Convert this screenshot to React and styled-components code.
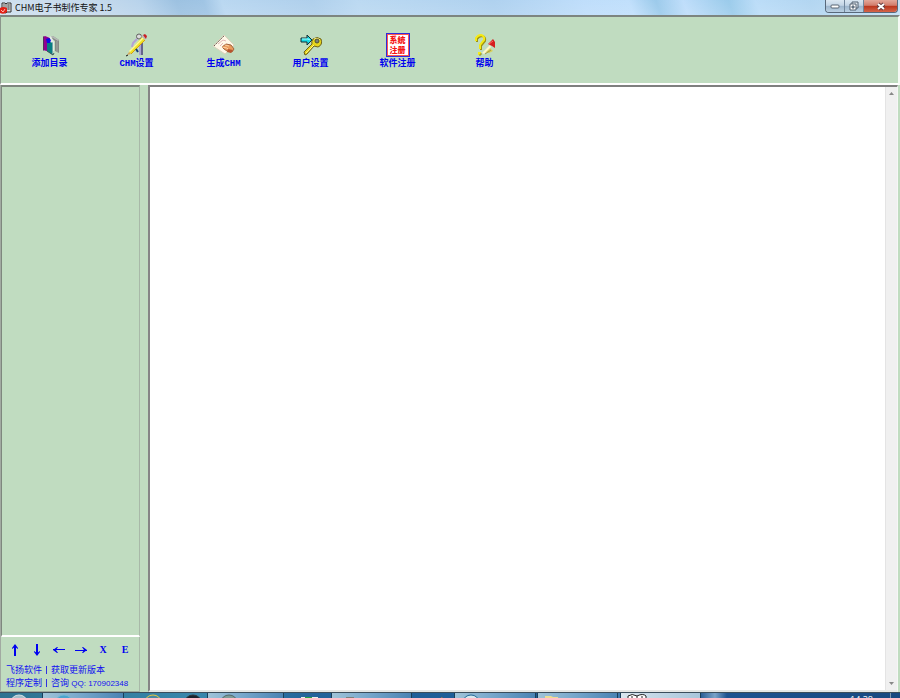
import React from 'react';
import styled, { createGlobalStyle } from 'styled-components';

const Global = createGlobalStyle`
  *, *::before, *::after { box-sizing: border-box; }
  body { margin: 0; overflow: hidden; }
`;

const Desktop = styled.div`
  display: grid;
  grid-template-rows: 15px 70px minmax(0, 1fr) 6px;
  height: 100vh;
  background: #c0dcc0;
  font-family: "Liberation Sans", "Noto Sans CJK SC", sans-serif;
`;

const TitleBar = styled.header`
  display: flex;
  align-items: flex-start;
  padding-right: 2px;
  background:
    linear-gradient(180deg, rgba(255,255,255,.12), rgba(255,255,255,.2)),
    linear-gradient(70deg, #c9dced 0%, #bdd4e9 11%, #aecde9 16%, #8fb9dd 20%, #92bce0 23%, #b0d2ef 25%, #a4c9e9 35%, #b2d4f0 40%, #a4cbed 55%, #b6d9fa 65%, #b8dbfb 70%, #8ec3e8 73%, #b6d9fa 76%, #8dc4e8 81%, #b2d8f7 84%, #a8d0ef 90%, #bcdcf4 100%);
`;

const Title = styled.h1`
  display: flex;
  flex: 1;
  gap: 3px;
  align-items: center;
  height: 15px;
  margin: 0;
  color: #111;
  font: 400 9px/15px "Noto Sans CJK SC", sans-serif;
  white-space: nowrap;
`;

const WindowButtons = styled.div`
  display: flex;
  height: 13px;
  border: 1px solid #58687a;
  border-top: 0;
  border-radius: 0 0 4px 4px;
  overflow: hidden;
`;

const WindowButton = styled.button`
  display: grid;
  place-items: center;
  width: ${p => (p.$close ? 33 : 19)}px;
  padding: 0;
  border: 0;
  border-right: ${p => (p.$close ? 0 : 1)}px solid #71869c;
  background: ${p => p.$close
    ? 'linear-gradient(#e3a79a, #d27c6b 45%, #b9341c 50%, #d4654a)'
    : 'linear-gradient(#dbe7f2, #c2d4e5 45%, #9db5cc 50%, #bad0e3)'};
`;

const Toolbar = styled.nav`
  display: flex;
  align-items: flex-start;
  padding: 16px 5px 0;
  border: solid;
  border-width: 2px 2px 2px 1px;
  border-color: #7d8580 #f4faf4 #fff #8b958b;
`;

const ToolButton = styled.button`
  display: flex;
  flex-direction: column;
  align-items: center;
  gap: 1px;
  width: 87px;
  padding: 0;
  border: 0;
  background: none;
  color: #0000f0;
  font: 700 9px/12px "Liberation Mono", "Noto Sans CJK SC", monospace;
  white-space: nowrap;
`;

const Workspace = styled.main`
  display: grid;
  grid-template-columns: 140px minmax(0, 1fr);
  gap: 8px;
  padding-right: 2px;
  min-height: 0;
`;

const Sidebar = styled.aside`
  display: grid;
  grid-template-rows: minmax(0, 1fr) 55px;
  border-left: 1px solid #a2aaa2;
  border-right: 1px solid #fff;
`;

const Tree = styled.section`
  border: solid;
  border-width: 2px 1px 2px 1px;
  border-color: #7e877e #a8b8a8 #fff #7e877e;
`;

const SidebarFooter = styled.footer`
  padding: 5px 3px 0;
  border-right: 1px solid #a8b8a8;
  border-bottom: 1px solid #9ba99b;
  color: #1010f0;
`;

const Actions = styled.div`
  display: grid;
  grid-template-columns: repeat(6, 22px);
  height: 22px;
`;

const Action = styled.button`
  display: grid;
  place-items: center;
  height: 16px;
  padding: 0;
  border: 0;
  background: none;
  color: #0000f0;
  font: 700 10px/16px "Liberation Serif", serif;
`;

const InfoRow = styled.div`
  display: grid;
  grid-template-columns: 37px 8px 1fr;
  height: 13px;
  padding-left: 2px;
  font: 400 8px/13px "Liberation Sans", "Noto Sans CJK SC", sans-serif;
  white-space: nowrap;
`;

const InfoLink = styled.a`
  color: inherit;
  text-decoration: none;
`;

const Han = styled.span`
  font-size: 9px;
`;

const Divider = styled.span`
  width: 1px;
  height: 8px;
  margin: 2px 3px;
  background: #3030e0;
`;

const Editor = styled.section`
  display: grid;
  grid-template-columns: minmax(0, 1fr) 12px;
  min-height: 0;
  border: solid;
  border-width: 2px 1px 2px 2px;
  border-color: #7f7f7f #f6f6f6 #e6e8e6 #858585;
  background: #fff;
`;

const Page = styled.textarea`
  width: 100%;
  height: 100%;
  padding: 4px;
  border: 0;
  outline: 0;
  resize: none;
  overflow: hidden;
  background: #fff;
  font: 9px/12px "Liberation Sans", sans-serif;
`;

const ScrollTrack = styled.div`
  display: flex;
  flex-direction: column;
  justify-content: space-between;
  border-left: 1px solid #e4e4e4;
  background: #f0f0f0;
`;

const ScrollButton = styled.button`
  display: grid;
  place-items: center;
  height: 13px;
  padding: 0;
  border: 0;
  background: none;
`;

const Taskbar = styled.footer`
  display: grid;
  grid-template-columns: 42fr 82fr 83fr 77fr 47fr 81fr 42fr 82fr 1fr 81fr 2fr 81fr 199fr;
  overflow: hidden;
  border-top: 1px solid #3b4e5c;
  background: linear-gradient(90deg, #2e7291 0%, #3987ac 22%, #22639a 35%, #1d5b96 60%, #659bc7 78%, #184b82 82%, #174980 96%, #38658d 100%);
`;

const TaskSlot = styled.div`
  display: flex;
  gap: 22px;
  padding-left: ${p => p.$inset || 0}px;
  overflow: hidden;
  background: ${p => (p.$tray ? 'linear-gradient(90deg, #2c5f96, #7aa3c8 7%, #1e5390 13%, #174980)' : 'none')};
`;

const TaskButton = styled.button`
  display: flex;
  padding: 0 0 0 ${p => p.$inset || 12}px;
  border: 1px solid #193e59;
  border-width: 0 1px;
  overflow: hidden;
  background: ${p => p.$active
    ? 'linear-gradient(90deg, #d8e6ee, #a8c5da)'
    : 'linear-gradient(90deg, #9fc3d8, #78a8cc 45%, #4a83b3)'};
`;

const Clock = styled.time`
  width: 41px;
  margin: 0 9px 0 auto;
  padding-top: 2px;
  border-right: 1px solid #7895ae;
  color: #fff;
  font: 400 9px/10px "Open Sans", sans-serif;
`;

const AppIcon = () => (
  <svg width="12" height="13" viewBox="0 0 12 13" aria-hidden="true">
    <path d="M2 2h3l1 1 1-1h4v9H7l-1 1-4-1z" fill="#dedede" stroke="#333" />
    <path d="M6 3v7M8 3v6M9 3v6M4 3v4" stroke="#666" />
    <path d="M0 7q3-2 7 0v4q-3 3-7 1z" fill="#e22117" />
    <path d="m1 9 2 2 2-3" fill="none" stroke="#ffb5ad" />
  </svg>
);

const BooksIcon = () => (
  <svg width="24" height="24" viewBox="0 0 24 24" aria-hidden="true">
    <path d="m12 4 3-1 6 4v13l-4-2V8z" fill="#858985" />
    <path d="m12 4 3-1 6 4-1 1-5-3z" fill="#b7bbb7" />
    <path d="m10 5 3-2 3 6v9h-3z" fill="#e4ebe4" />
    <path d="M19 8v11" stroke="#a6aaa6" />
    <path d="m5 4 2-1 5 2v14l-7-2z" fill="#920091" />
    <path d="M5 4v13l1 1V3z" fill="#54305e" />
    <path d="m9 8 6 2v12l-6-4z" fill="#087e83" />
    <path d="m14 10 1-1v12l-1 1z" fill="#71a8a7" />
    <path d="m8 6 3-1 2 2-1 3H9z" fill="#0a0ce5" />
    <path d="m9 18 6 4 1-2" fill="none" stroke="#375656" />
  </svg>
);

const CompassIcon = () => (
  <svg width="24" height="24" viewBox="0 0 24 24" aria-hidden="true">
    <path d="m12 6-4 4-1 4" fill="none" stroke="#b3a0d5" strokeWidth="2" />
    <path d="M15 12v10" stroke="#aba6d1" strokeWidth="2" />
    <path d="M17 8v14" stroke="#65648b" strokeWidth="2" />
    <circle cx="14" cy="3.5" r="2.5" fill="#ddd" stroke="#606060" />
    <path d="m4 19 2 2L20 7l-3-3z" fill="#eee326" />
    <path d="m4 18 14-14 1 1L5 19z" fill="#fff89b" />
    <path d="m6 21 14-14" stroke="#d59c15" />
    <path d="m16 3 2-1 3 3-1 2z" fill="#bcb5b5" />
    <path d="m18 2 2-1 2 2-1 3z" fill="#c91e24" />
    <path d="m4 19-2 3 4-1z" fill="#d5a85d" />
    <path d="m1 23 2-1" stroke="#111" />
    <path d="m11 16 2 3" stroke="#173c77" strokeWidth="2" />
  </svg>
);

const WritingIcon = () => (
  <svg width="24" height="24" viewBox="0 0 24 24" aria-hidden="true">
    <path d="M12 2 1 13l12 8 9-9z" fill="#fff8e8" stroke="#dcd2bc" />
    <path d="m2 13 10-10" stroke="#655e55" strokeDasharray="2 1" />
    <path d="m6 11 5-4 3 1M8 13l3-3" stroke="#e3b5b5" fill="none" />
    <path d="m10 14 4-3 5 1 3 4-2 3-5-1-3-2z" fill="#e99b5c" stroke="#a26440" />
    <path d="m10 14 5 1 2 2M13 12l4 1" stroke="#ffd0a0" fill="none" />
    <path d="m16 16 5 1-2 3-4-1z" fill="#b7542e" />
  </svg>
);

const KeyIcon = () => (
  <svg width="24" height="24" viewBox="0 0 24 24" aria-hidden="true">
    <path d="M2 5h6V2l5 5-5 5V9H2z" fill="#18d9e4" stroke="#142d34" />
    <path d="M3 6h6l2 1" stroke="#a5ffff" fill="none" />
    <path d="M14 6q4-3 8 0 2 6-3 8l-4-1-7 8-2 1-1-3 8-8q-1-2 1-5z" fill="#e6d51b" stroke="#6c6019" />
    <path d="M7 20 15 12M15 6q3-2 6 1" stroke="#fff686" fill="none" />
    <circle cx="18" cy="8" r="2" fill="#7a807a" stroke="#4f5131" />
  </svg>
);

const SealFrame = styled.span`
  display: grid;
  place-content: center;
  width: 24px;
  height: 24px;
  border: 1px solid #302adb;
  box-shadow: inset 0 0 0 1px #ff5650;
  background: #fff;
  color: #f51616;
  font: 900 8px/10px "Noto Sans CJK SC", sans-serif;
`;

const SealLine = styled.span`
  display: block;
`;

const SealIcon = () => (
  <SealFrame><SealLine>系统</SealLine><SealLine>注册</SealLine></SealFrame>
);

const HelpIcon = () => (
  <svg width="24" height="24" viewBox="0 0 24 24" aria-hidden="true">
    <path d="M4 9V6q2-3 5-3 4 1 3 5l-4 5v4" fill="none" stroke="#9f940e" strokeWidth="2" />
    <path d="M3 8V5q2-3 5-3 4 1 3 5l-4 5v4" fill="none" stroke="#f5e914" strokeWidth="2" />
    <path d="M5 19h3v3H5z" fill="#f6eb17" />
    <path d="M8 20v2H6" stroke="#9a9220" fill="none" />
    <path d="m12 19 5-4 3 3-4 2z" fill="#d9ce58" />
    <path d="m9 20 8-8 1 2-7 7z" fill="#fff6c8" />
    <path d="m15 11 5-5 2 3v6l-3-2z" fill="#d51d20" />
    <path d="m16 11 4-3" stroke="#ff6a63" />
    <path d="m12 21 6-4" stroke="#a59b43" />
  </svg>
);

const arrowTurns = { up: 0, right: 90, down: 180, left: 270 };

const Arrow = ({ direction }) => {
  const horizontal = direction === 'left' || direction === 'right';
  return (
    <svg width="12" height="12" viewBox="0 0 12 12" aria-hidden="true">
      <g transform={`rotate(${arrowTurns[direction]} 6 6)`} fill="#0000f0">
        <path d={horizontal ? 'M6 0h1v12H6z' : 'M5 1h2v11H5z'} />
        <path d="M6 0 9 4v1L6 3 3 5V4z" />
      </g>
    </svg>
  );
};

const Triangle = ({ down }) => (
  <svg width="5" height="3" viewBox="0 0 5 3" aria-hidden="true">
    <path d={down ? 'M0 0h5L2.5 3z' : 'M0 3h5L2.5 0z'} fill="#888" />
  </svg>
);

const Orb = ({ fill, stroke }) => (
  <svg width="18" height="6" viewBox="0 0 18 6" aria-hidden="true">
    <ellipse cx="9" cy="9" rx="8" ry="7" fill={fill} stroke={stroke} />
  </svg>
);

const tools = [
  ['添加目录', BooksIcon],
  ['CHM设置', CompassIcon],
  ['生成CHM', WritingIcon],
  ['用户设置', KeyIcon],
  ['软件注册', SealIcon],
  ['帮助', HelpIcon],
];

export default function App() {
  return (
    <>
      <Global />
      <Desktop>
        <TitleBar>
          <Title><AppIcon />CHM电子书制作专家 1.5</Title>
          <WindowButtons>
            <WindowButton aria-label="最小化">
              <svg width="10" height="8" viewBox="0 0 10 8"><rect x="1" y="3" width="8" height="3" rx="1" fill="#fff" stroke="#596572" /></svg>
            </WindowButton>
            <WindowButton aria-label="还原">
              <svg width="10" height="10" viewBox="0 0 10 10"><path d="M3 1h6v6H3z" fill="#dce5ed" stroke="#536171" /><path d="M1 3h6v6H1z" fill="#fff" stroke="#536171" /><path d="M3 5h2v2H3z" fill="#8da2b6" stroke="#536171" /></svg>
            </WindowButton>
            <WindowButton $close aria-label="关闭">
              <svg width="10" height="9" viewBox="0 0 10 9"><path d="m2 2 6 5M8 2 2 7" stroke="#653c40" strokeWidth="4" /><path d="m2 2 6 5M8 2 2 7" stroke="#fff" strokeWidth="2" /></svg>
            </WindowButton>
          </WindowButtons>
        </TitleBar>
        <Toolbar aria-label="工具栏">
          {tools.map(([label, Icon]) => (
            <ToolButton key={label}><Icon />{label}</ToolButton>
          ))}
        </Toolbar>
        <Workspace>
          <Sidebar>
            <Tree aria-label="目录" />
            <SidebarFooter>
              <Actions>
                <Action aria-label="上移"><Arrow direction="up" /></Action>
                <Action aria-label="下移"><Arrow direction="down" /></Action>
                <Action aria-label="左移"><Arrow direction="left" /></Action>
                <Action aria-label="右移"><Arrow direction="right" /></Action>
                <Action>X</Action>
                <Action>E</Action>
              </Actions>
              <InfoRow>
                <InfoLink href="#home"><Han>飞扬软件</Han></InfoLink><Divider />
                <InfoLink href="#update"><Han>获取更新版本</Han></InfoLink>
              </InfoRow>
              <InfoRow>
                <InfoLink href="#custom"><Han>程序定制</Han></InfoLink><Divider />
                <span><Han>咨询</Han> QQ: 170902348</span>
              </InfoRow>
            </SidebarFooter>
          </Sidebar>
          <Editor>
            <Page aria-label="正文" />
            <ScrollTrack>
              <ScrollButton aria-label="向上滚动"><Triangle /></ScrollButton>
              <ScrollButton aria-label="向下滚动"><Triangle down /></ScrollButton>
            </ScrollTrack>
          </Editor>
        </Workspace>
        <Taskbar>
          <TaskSlot $inset={10}><Orb fill="#a5bfca" stroke="#d3dfe4" /></TaskSlot>
          <TaskButton aria-label="任务 1"><Orb fill="#4ba3cd" stroke="#72b9d6" /></TaskButton>
          <TaskSlot $inset={20}><Orb fill="#4788a1" stroke="#e9c63f" /><Orb fill="#17222d" stroke="#30353a" /></TaskSlot>
          <TaskButton aria-label="任务 2"><Orb fill="#7d9c98" stroke="#536a6b" /></TaskButton>
          <TaskSlot $inset={16}>
            <svg width="20" height="6" viewBox="0 0 20 6"><path d="M1 4h7v2H1zm9 0h8v2h-8z" fill="#e7f0e9" /><path d="M5 5h7" stroke="#29a343" strokeWidth="2" /></svg>
          </TaskSlot>
          <TaskButton aria-label="任务 3"><svg width="12" height="6" viewBox="0 0 12 6"><path d="M2 4h8v2H2z" fill="#7d817d" /></svg></TaskButton>
          <TaskSlot $inset={26}><svg width="8" height="6" viewBox="0 0 8 6"><path d="m2 6 2-2 1 2" fill="#ef7d22" /></svg></TaskSlot>
          <TaskButton $inset={7} aria-label="任务 4"><Orb fill="#d9e8ee" stroke="#206897" /></TaskButton>
          <span />
          <TaskButton $inset={6} aria-label="任务 5"><svg width="16" height="6" viewBox="0 0 16 6"><path d="M1 3h6l2 1h5v2H1z" fill="#eedc91" /></svg></TaskButton>
          <span />
          <TaskButton $active $inset={5} aria-label="CHM电子书制作专家"><svg width="24" height="6" viewBox="0 0 24 6"><path d="M2 6V3q4-3 9 0 6-3 9 0v3" fill="#fff" stroke="#222" /><path d="M11 3v3M6 3v3m10-3v3" stroke="#222" /></svg></TaskButton>
          <TaskSlot $tray><Clock>14:38</Clock></TaskSlot>
        </Taskbar>
      </Desktop>
    </>
  );
}
